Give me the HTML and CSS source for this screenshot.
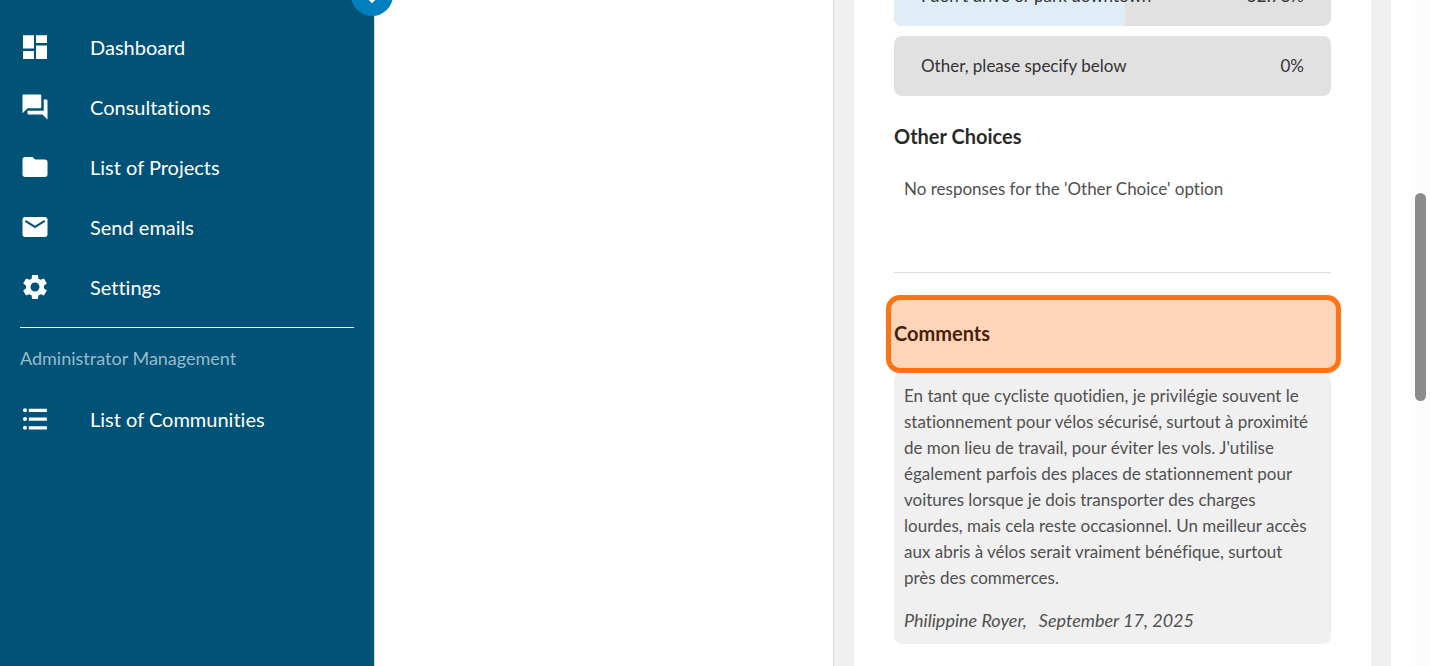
FILE: index.html
```html
<!DOCTYPE html>
<html lang="en">
<head>
    <meta charset="UTF-8">
    <meta name="viewport" content="width=device-width, initial-scale=1.0">
    <title>Consultations</title>
    <link rel="stylesheet" href="styles.css">
</head>
<body>

    <aside class="sidebar">
        <button class="toggle" type="button" aria-label="Collapse menu">
            <svg viewBox="0 0 24 24"><path d="M6 9l6 6 6-6" fill="none" stroke="#fff" stroke-width="4"/></svg>
        </button>

        <nav class="menu">
            <a href="#" class="menuItem">
                <svg viewBox="0 0 24 24"><path d="M2.400 2.600h8.800v10.600H2.400zM2.400 15.200h8.800v6.400H2.400zM12.800 2.600h8.800v6.200h-8.800zM12.800 10.800h8.800v10.800h-8.800z"/></svg>
                <span>Dashboard</span>
            </a>
            <a href="#" class="menuItem">
                <svg viewBox="0 0 24 24"><path d="M21 6h-2v9H6v2c0 .55.45 1 1 1h11l4 4V7c0-.55-.45-1-1-1zm-4 6V3c0-.55-.45-1-1-1H3c-.55 0-1 .45-1 1v14l4-4h10c.55 0 1-.45 1-1z"/></svg>
                <span>Consultations</span>
            </a>
            <a href="#" class="menuItem">
                <svg viewBox="0 0 24 24"><path d="M10 4H4c-1.100 0-2 .9-2 2v12c0 1.100.9 2 2 2h16c1.100 0 2-.9 2-2V8c0-1.100-.9-2-2-2h-8l-2-2z"/></svg>
                <span>List of Projects</span>
            </a>
            <a href="#" class="menuItem">
                <svg viewBox="0 0 24 24"><path d="M20 4H4c-1.100 0-2 .9-2 2v12c0 1.100.9 2 2 2h16c1.100 0 2-.9 2-2V6c0-1.100-.9-2-2-2zm-.400 4.250l-7.070 4.420c-.320.200-.740.200-1.060 0L4.400 8.250a.85.85 0 1 1 .9-1.440L12 11l6.700-4.190a.85.85 0 1 1 .9 1.440z"/></svg>
                <span>Send emails</span>
            </a>
            <a href="#" class="menuItem">
                <svg viewBox="0 0 24 24"><path d="M19.140 12.940c.040-.300.060-.610.060-.940 0-.320-.020-.640-.070-.940l2.030-1.580a.49.49 0 0 0 .120-.610l-1.920-3.320a.488.488 0 0 0-.590-.220l-2.390.960c-.500-.380-1.030-.700-1.620-.940l-.360-2.540a.484.484 0 0 0-.480-.410h-3.840c-.240 0-.430.170-.470.410l-.360 2.540c-.590.240-1.130.570-1.620.940l-2.390-.960a.48.48 0 0 0-.590.220L2.740 8.870c-.120.210-.080.470.120.610l2.030 1.580c-.050.300-.090.630-.090.940s.020.640.070.940l-2.030 1.580a.49.49 0 0 0-.120.610l1.920 3.320c.120.220.370.290.590.220l2.390-.960c.500.380 1.030.700 1.620.940l.360 2.540c.050.240.240.410.480.410h3.840c.240 0 .440-.170.470-.410l.360-2.540c.590-.240 1.130-.560 1.620-.940l2.390.960c.220.080.470 0 .590-.220l1.920-3.320a.48.48 0 0 0-.120-.610l-2.010-1.580zM12 15.600A3.610 3.610 0 0 1 8.400 12c0-1.980 1.620-3.600 3.600-3.600s3.600 1.620 3.600 3.600-1.620 3.600-3.600 3.600z"/></svg>
                <span>Settings</span>
            </a>
        </nav>

        <div class="menuTitle">Administrator Management</div>

        <nav class="menu">
            <a href="#" class="menuItem">
                <svg viewBox="0 0 24 24"><circle cx="4" cy="5" r="1.6"/><circle cx="4" cy="12" r="1.6"/><circle cx="4" cy="19" r="1.6"/><path d="M7 3.800h14.500v2.500H7zM7 10.800h14.500v2.500H7zM7 17.800h14.500v2.500H7z"/></svg>
                <span>List of Communities</span>
            </a>
        </nav>
    </aside>

    <main class="content"></main>

    <section class="panel">
        <div class="card">
            <div class="answers">
                <div class="answer">
                    <div class="fill" style="width: 52.78%"></div>
                    <span>I don't drive or park downtown</span>
                    <span>52.78%</span>
                </div>
                <div class="answer">
                    <span>Other, please specify below</span>
                    <span>0%</span>
                </div>
            </div>

            <h2 class="title">Other Choices</h2>
            <p class="empty">No responses for the 'Other Choice' option</p>

            <h2 class="title highlight">Comments</h2>
            <article class="comment">
                <p>En tant que cycliste quotidien, je privilégie souvent le stationnement pour vélos sécurisé, surtout à proximité de mon lieu de travail, pour éviter les vols. J'utilise également parfois des places de stationnement pour voitures lorsque je dois transporter des charges lourdes, mais cela reste occasionnel. Un meilleur accès aux abris à vélos serait vraiment bénéfique, surtout près des commerces.</p>
                <div class="author">
                    <span>Philippine Royer,</span>
                    <span>September 17, 2025</span>
                </div>
            </article>
        </div>
    </section>

    <div class="scroll">
        <div class="thumb"></div>
    </div>

</body>
</html>
```
FILE: styles.css
```css
*{
    box-sizing: border-box;
}

body{
    margin: 0;
    height: 100vh;
    display: flex;
    overflow: hidden;
    background-color: #fff;
    color: #505050;
    font-family: Lato, sans-serif;
    font-size: 17px;
    line-height: 26px;
    font-variant-ligatures: none;
}

.sidebar{
    position: relative;
    flex: 0 0 375px;
    padding: 17px 20px;
    background-color: #005277;
    border-right: 1px solid #ddd;
}

.toggle{
    position: absolute;
    top: -26px;
    right: -19px;
    width: 42px;
    height: 42px;
    padding: 10px 8px 6px;
    border: none;
    border-radius: 50%;
    background-color: #007fbf;
}

.toggle svg{
    display: block;
    width: 26px;
    height: 26px;
}

.menuItem{
    display: flex;
    align-items: center;
    gap: 40px;
    height: 60px;
    color: #fff;
    font-size: 20px;
    text-decoration: none;
}

.menuItem svg{
    width: 30px;
    height: 30px;
    fill: #fff;
}

.menuTitle{
    margin: 10px 0 18px;
    padding-top: 17px;
    border-top: 1px solid #fff;
    color: #99bac9;
    font-size: 18px;
}

.content{
    flex: 1;
}

.panel{
    flex: 0 0 558px;
    padding: 0 20px;
    background-color: #f0f0f0;
    border-left: 1px solid #ddd;
}

.card{
    display: flow-root;
    position: relative;
    z-index: 0;
    min-height: 100%;
    padding: 0 40px 40px;
    background-color: #fff;
}

/* list is scrolled a bit under the top edge */
.answers{
    display: flex;
    flex-direction: column;
    gap: 10px;
    margin-top: -34px;
}

.answer{
    position: relative;
    display: flex;
    align-items: center;
    justify-content: space-between;
    height: 60px;
    padding: 0 27px;
    border-radius: 8px;
    overflow: hidden;
    background-color: #e1e1e1;
    color: #333;
}

.answer span{
    position: relative;
}

.fill{
    position: absolute;
    top: 0;
    left: 0;
    height: 100%;
    background-color: #dfedf7;
}

.title{
    margin: 0;
    padding: 27px 0 24px;
    color: #2a2a2a;
    font-size: 20px;
    font-weight: bold;
}

.empty{
    margin: 0 0 22px;
    padding: 3px 10px 70px;
    border-bottom: 1px solid #ddd;
}

.highlight{
    position: relative;
    padding: 25px 0 27px;
    color: #4a1f08;
}

.highlight::before{
    content: "";
    position: absolute;
    z-index: -1;
    inset: 0 -10px 0 -8px;
    border: 5px solid #fb7516;
    border-radius: 14px;
    background-color: #fdd5b9;
}

.comment{
    padding: 10px 10px 11px;
    border-radius: 8px;
    background-color: #f0f0f0;
}

.comment p{
    margin: 0 0 16px;
    padding-right: 6px;
}

.author{
    display: flex;
    gap: 12px;
    font-size: 18px;
    font-style: italic;
}

.scroll{
    flex: 0 0 19px;
    margin-left: 20px;
    padding: 193px 4px 0;
    background-color: #fcfcfc;
}

.thumb{
    height: 208px;
    border-radius: 6px;
    background-color: #8b8b8b;
}
```
